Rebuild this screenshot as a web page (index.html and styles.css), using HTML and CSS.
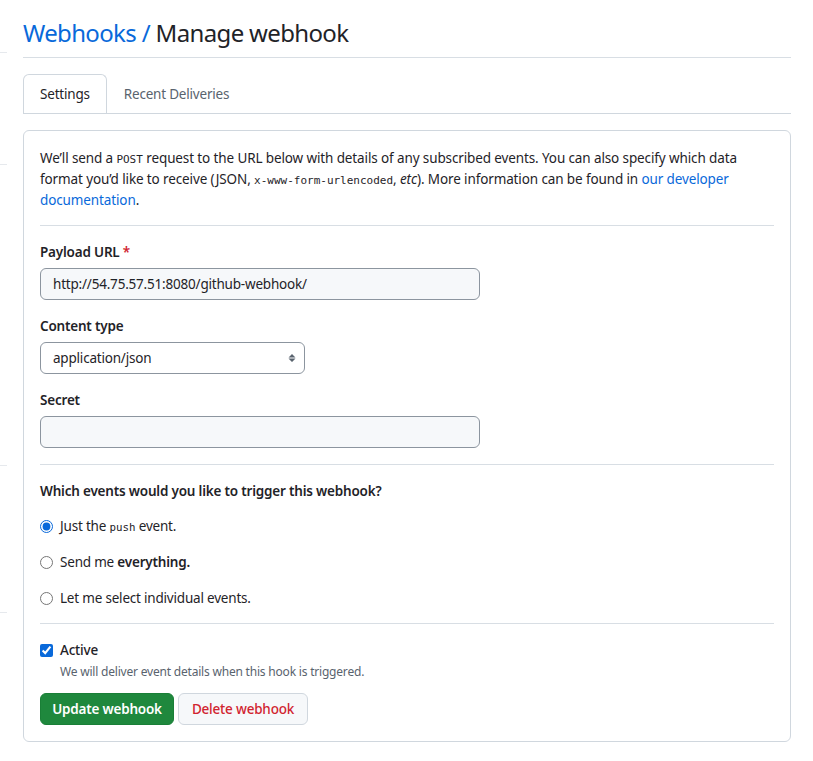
FILE: index.html
```html
<!DOCTYPE html>
<html lang="en">
<head>
<meta charset="utf-8">
<title>Manage webhook</title>
<link rel="stylesheet" href="styles.css">
</head>
<body>
<div class="page">
  <nav class="sidebar">
    <div class="side-item side-a"></div>
    <div class="side-item side-b"></div>
    <div class="side-item side-c"></div>
    <div class="side-item side-d"></div>
  </nav>
  <main class="main">
    <div class="subhead">
      <h2 class="subhead-title"><a class="crumb" href="#">Webhooks</a> <span class="crumb-sep">/</span> Manage webhook</h2>
    </div>
    <nav class="tabs">
      <a class="tab tab-selected" href="#">Settings</a>
      <a class="tab" href="#">Recent Deliveries</a>
    </nav>
    <form class="box">
      <p class="intro">We’ll send a <code>POST</code> request to the URL below with details of any subscribed events. You can also specify which data format you’d like to receive (JSON, <code>x-www-form-urlencoded</code>, <em>etc</em>). More information can be found in <a href="#">our developer documentation</a>.</p>
      <hr class="divider">
      <div class="form-group">
        <label class="label">Payload URL <span class="req">*</span></label>
        <input class="input input-wide" type="text" value="http://54.75.57.51:8080/github-webhook/">
      </div>
      <div class="form-group">
        <label class="label">Content type</label>
        <div class="select-wrap">
          <select class="select">
            <option>application/json</option>
          </select>
          <svg class="select-icon" width="10" height="12" viewBox="0 0 10 12"><path d="M5 2 L8.5 5.5 H1.5 Z M5 10 L8.5 6.5 H1.5 Z" fill="#59636e"/></svg>
        </div>
      </div>
      <div class="form-group">
        <label class="label">Secret</label>
        <input class="input input-wide" type="text" value="">
      </div>
      <hr class="divider">
      <div class="events">
        <div class="label events-title">Which events would you like to trigger this webhook?</div>
        <label class="radio-row"><input type="radio" name="ev" checked> <span>Just the <code class="push">push</code> event.</span></label>
        <label class="radio-row"><input type="radio" name="ev"> <span>Send me <strong>everything.</strong></span></label>
        <label class="radio-row"><input type="radio" name="ev"> <span>Let me select individual events.</span></label>
      </div>
      <hr class="divider">
      <div class="active">
        <label class="check-row"><input type="checkbox" checked> <span class="active-label">Active</span></label>
        <p class="note">We will deliver event details when this hook is triggered.</p>
      </div>
      <div class="actions">
        <button type="button" class="btn btn-primary">Update webhook</button>
        <button type="button" class="btn btn-danger">Delete webhook</button>
      </div>
    </form>
  </main>
</div>
</body>
</html>
```
FILE: styles.css
```css
* { box-sizing: border-box; }
html, body { margin: 0; padding: 0; background: #ffffff; }
body {
  font-family: "Noto Sans", "Liberation Sans", sans-serif;
  font-size: 13.5px;
  letter-spacing: -0.2px;
  line-height: 1.5;
  color: #1f2328;
}
a { color: #0969da; text-decoration: none; }
code {
  font-family: "DejaVu Sans Mono", "Liberation Mono", monospace;
  font-size: 11px;
  line-height: 1;
  letter-spacing: 0;
}

.page { display: flex; align-items: flex-start; }

.sidebar { width: 7px; flex: none; }
.side-item { border-bottom: 1px solid #e6e9ed; }
.side-a { height: 53px; }
.side-b { height: 112px; }
.side-c { height: 301px; }
.side-d { height: 147px; }

.main {
  width: 768px;
  margin-left: 16px;
  padding-top: 18px;
}

.subhead {
  border-bottom: 1px solid #d8dee4;
  padding-bottom: 9px;
  margin-bottom: 16px;
}
.subhead-title {
  margin: 0;
  font-size: 24px;
  font-weight: 400;
  letter-spacing: -0.65px;
  line-height: 30px;
}
.crumb-sep { color: #0969da; }

.tabs {
  display: flex;
  border-bottom: 1px solid #d0d7de;
  margin-bottom: 16px;
}
.tab {
  display: block;
  padding: 8px 16px;
  line-height: 22px;
  color: #59636e;
  border: 1px solid transparent;
  border-bottom: 0;
  border-radius: 6px 6px 0 0;
}
.tab-selected {
  color: #1f2328;
  border-color: #d0d7de;
  background: #fff;
}

.box {
  display: block;
  border: 1px solid #d0d7de;
  border-radius: 6px;
  padding: 17px 16px 16px;
}

.intro { margin: 0 0 14px; line-height: 21px; letter-spacing: -0.12px; }
.intro em { font-style: italic; }

.divider {
  border: 0;
  border-top: 1px solid #d8dee4;
  margin: 0 0 16px;
  height: 0;
}

.form-group { margin-bottom: 16px; }
.form-group:last-of-type { margin-bottom: 15px; }
.label {
  display: block;
  font-weight: 600;
  line-height: 20px;
  margin-bottom: 6px;
}
.req { color: #d1242f; }

.input {
  display: block;
  height: 32px;
  padding: 0 12px;
  font: inherit;
  letter-spacing: inherit;
  color: #1f2328;
  background: #f6f8fa;
  border: 1px solid #8c959f;
  border-radius: 6px;
}
.input-wide { width: 440px; }

.select-wrap { position: relative; width: 265px; }
.select {
  display: block;
  width: 265px;
  height: 32px;
  padding: 0 28px 0 12px;
  font: inherit;
  letter-spacing: inherit;
  color: #1f2328;
  background: #fff;
  border: 1px solid #8c959f;
  border-radius: 6px;
  appearance: none;
  -webkit-appearance: none;
}
.select-icon { position: absolute; right: 8px; top: 10px; }

.events { margin-bottom: 15px; }
.events-title { margin: 0 0 15px; }
.radio-row, .check-row {
  display: flex;
  align-items: center;
  gap: 7px;
  line-height: 20px;
}
.radio-row + .radio-row { margin-top: 16px; }
.radio-row input, .check-row input {
  margin: 0;
  width: 13px;
  height: 13px;
  accent-color: #0969da;
}
.radio-row strong { font-weight: 600; }
.push { font-size: 10.8px; }

.active { margin-bottom: 12px; }
.active-label { font-weight: 500; }
.note {
  margin: 3px 0 0 20px;
  font-size: 12px;
  line-height: 18px;
  color: #59636e;
}

.actions { display: flex; gap: 4px; }
.btn {
  height: 32px;
  padding: 0;
  font: inherit;
  letter-spacing: inherit;
  white-space: nowrap;
  border-radius: 6px;
  border: 1px solid;
  cursor: pointer;
}
.btn-primary {
  width: 134px;
  background: #1f883d;
  border-color: #1a7f37;
  color: #fff;
  font-weight: 600;
}
.btn-danger {
  width: 130px;
  background: #f6f8fa;
  border-color: #d0d7de;
  color: #d1242f;
  font-weight: 500;
}
```
